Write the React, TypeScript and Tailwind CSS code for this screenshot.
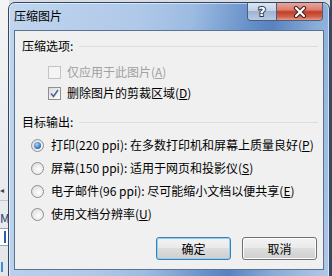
import React from "react";

const font = "font-['Noto_Sans_CJK_SC','Microsoft_YaHei',sans-serif]";

function U({ c }: { c: string }) {
  return <span className="underline underline-offset-[1px]">{c}</span>;
}

function Header({ label }: { label: string }) {
  return (
    <div className="flex h-4 items-center pl-[7px] pr-[5px]">
      <span className="text-[12px] leading-4 text-black">{label}</span>
      <div className="ml-[6px] h-px flex-1 bg-[#d5dfe5]" />
    </div>
  );
}

function Checkbox({ checked, disabled, children }: { checked?: boolean; disabled?: boolean; children: React.ReactNode }) {
  return (
    <div className="flex h-4 items-center pl-[33px]">
      <div
        className={
          "flex h-[13px] w-[13px] items-center justify-center border " +
          (disabled
            ? "border-[#c4c4c4] bg-[#f4f4f4]"
            : "border-[#8e8f8f] bg-[linear-gradient(135deg,#dcdcdc,#ffffff)]")
        }
      >
        {checked && (
          <svg width="9" height="9" viewBox="0 0 9 9">
            <path d="M1 4.5 L3.5 7.5 L8 1" fill="none" stroke="#4d62a3" strokeWidth="1.6" />
          </svg>
        )}
      </div>
      <span className={"ml-[6px] text-[12px] leading-4 " + (disabled ? "text-[#a0a0a0]" : "text-black")}>{children}</span>
    </div>
  );
}

function Radio({ selected, children }: { selected?: boolean; children: React.ReactNode }) {
  return (
    <div className="flex h-4 items-center pl-[16px]">
      <div className="flex h-[13px] w-[13px] items-center justify-center rounded-full border border-[#8e8f8f] bg-[radial-gradient(circle_at_60%_60%,#ffffff,#d6d6d6)]">
        {selected && (
          <div className="h-[7px] w-[7px] rounded-full bg-[radial-gradient(circle_at_40%_35%,#a8d4f7,#2a6fb5_70%,#1a4f8c)]" />
        )}
      </div>
      <span className="ml-[7px] text-[12px] leading-4 text-black">{children}</span>
    </div>
  );
}

function Btn({ def, children }: { def?: boolean; children: React.ReactNode }) {
  return (
    <div
      className={
        "flex h-[23px] w-[75px] items-center justify-center rounded-[3px] border text-[12px] text-black bg-[linear-gradient(#f2f2f2_0%,#ebebeb_45%,#dddddd_50%,#cfcfcf_100%)] " +
        (def
          ? "border-[#3c7fb1] shadow-[inset_0_0_0_1px_#8fd0f3]"
          : "border-[#707070] shadow-[inset_0_0_0_1px_#fcfcfc]")
      }
    >
      {children}
    </div>
  );
}

export default function App() {
  return (
    <div className={"relative h-[276px] w-[332px] overflow-hidden bg-[#d9dde3] " + font}>
      {/* background application bits */}
      <div className="absolute left-0 top-0 h-[276px] w-[9px] bg-[linear-gradient(#f4f4f4,#e4e6e9)]">
        <div className="absolute left-0 top-[186px] text-[8px] leading-none text-[#444]">◂</div>
        <div className="absolute left-0 top-[200px] h-px w-[9px] bg-[#c0c4c8]" />
        <div className="absolute left-0 top-[212px] text-[12px] leading-none text-[#1e3f73]">M</div>
        <div className="absolute left-0 top-[228px] h-[18px] w-[9px] border-y border-[#9aa3ad] bg-white">
          <div className="ml-[4px] mt-[2px] h-[12px] w-[2px] bg-[#2b5fa8]" />
        </div>
        <div className="absolute left-[1px] top-[262px] h-[10px] w-[2px] bg-[#3a8fd8]" />
      </div>
      <div className="absolute right-0 top-0 h-[276px] w-[2px] bg-[#3a4a5c]" />

      {/* window */}
      <div className="absolute left-[8px] top-[2px] h-[290px] w-[322px] rounded-t-[7px] border border-[#2f4868] bg-[linear-gradient(100deg,#c0d5ee_0%,#b0c9e8_35%,#9cbbe1_50%,#6690c8_66%,#5882c0_72%,#8aacd8_84%,#b3cae8_100%)] shadow-[inset_0_0_0_1px_rgba(255,255,255,0.55)]">
        {/* title */}
        <div className="absolute left-[5px] top-[5px] text-[12px] leading-4 text-black">压缩图片</div>
        {/* caption buttons */}
        <div className="absolute right-[6px] top-0 flex h-[18px] overflow-hidden rounded-b-[4px] border border-t-0 border-[#4b5f7a]">
          <div className="flex w-[29px] items-center justify-center border-r border-[#4b5f7a] bg-[linear-gradient(#dbe5f2_0%,#c2d2e7_45%,#9fb4d2_50%,#b9cbe3_100%)]">
            <span className="text-[13px] font-bold leading-none text-white [-webkit-text-stroke:2px_#2e3b4e] [paint-order:stroke_fill] font-['DejaVu_Sans',sans-serif]">?</span>
          </div>
          <div className="flex w-[45px] items-center justify-center bg-[linear-gradient(#eaa598_0%,#d98070_40%,#c43c26_52%,#d0604a_80%,#e89a86_100%)]">
            <svg width="16" height="12" viewBox="0 0 16 12">
              <path d="M4 2 L12 10 M12 2 L4 10" stroke="#3b2020" strokeWidth="4.2" strokeLinecap="round" />
              <path d="M4 2 L12 10 M12 2 L4 10" stroke="#ffffff" strokeWidth="2.2" strokeLinecap="round" />
            </svg>
          </div>
        </div>

        {/* client area */}
        <div className="absolute left-[5px] top-[27px] flex h-[240px] w-[310px] flex-col border border-[#5a7292] bg-[#f0f0f0]">
          <div className="mt-[7px]">
            <Header label="压缩选项:" />
          </div>
          <div className="mt-[10px]">
            <Checkbox disabled>
              仅应用于此图片(<U c="A" />)
            </Checkbox>
          </div>
          <div className="mt-[5px]">
            <Checkbox checked>
              删除图片的剪裁区域(<U c="D" />)
            </Checkbox>
          </div>
          <div className="mt-[13px]">
            <Header label="目标输出:" />
          </div>
          <div className="mt-[7px] flex flex-col gap-[7px]">
            <Radio selected>
              打印(220 ppi): 在多数打印机和屏幕上质量良好(<U c="P" />)
            </Radio>
            <Radio>
              屏幕(150 ppi): 适用于网页和投影仪(<U c="S" />)
            </Radio>
            <Radio>
              电子邮件(96 ppi): 尽可能缩小文档以便共享(<U c="E" />)
            </Radio>
            <Radio>
              使用文档分辨率(<U c="U" />)
            </Radio>
          </div>
          <div className="mt-[15px] flex justify-end gap-[11px] pr-[6px]">
            <Btn def>确定</Btn>
            <Btn>取消</Btn>
          </div>
        </div>
      </div>
    </div>
  );
}
